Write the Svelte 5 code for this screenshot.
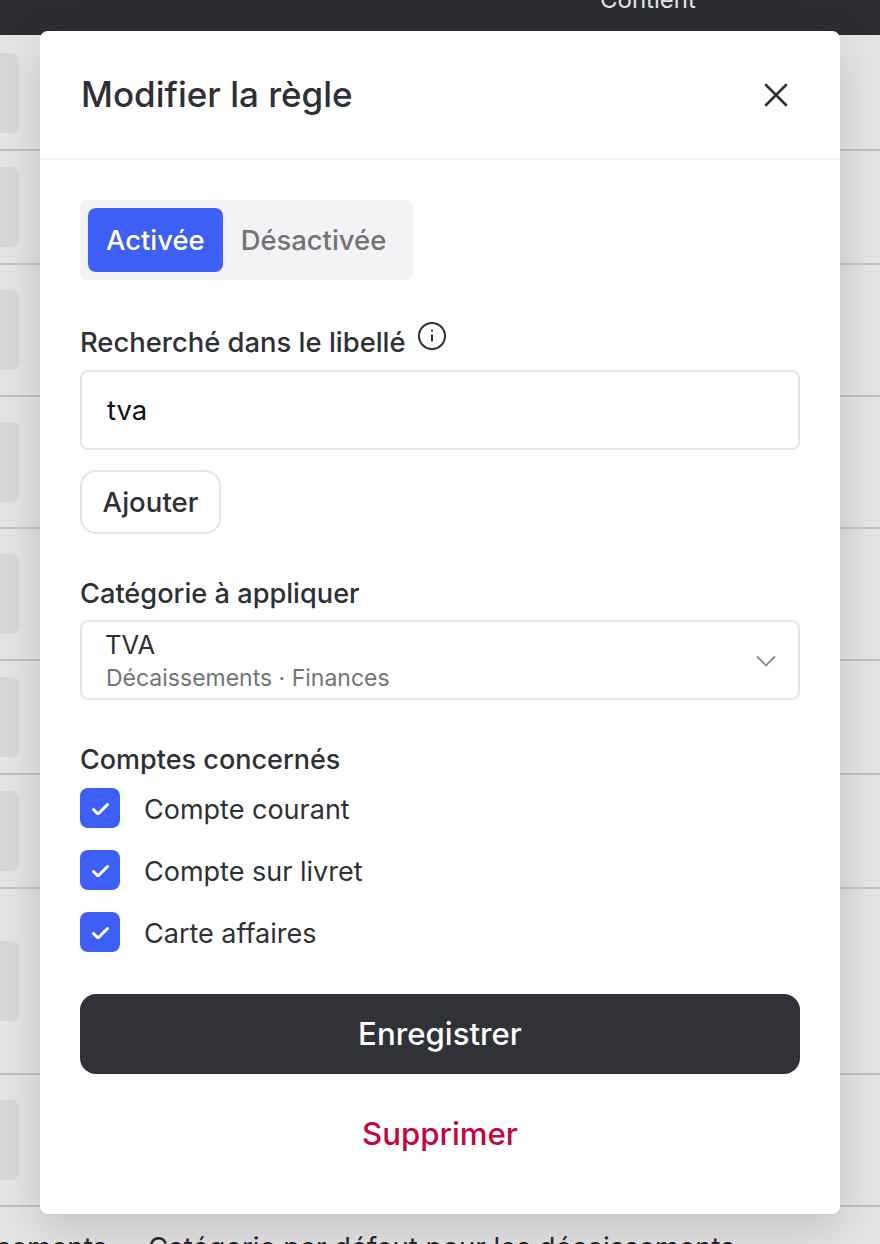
<script>
  const rows = ['s', 's', 'm', 'm', 'm', 's', 's', 'l', 'm'];
  const accounts = ['Compte courant', 'Compte sur livret', 'Carte affaires'];
</script>

<div class="page">
  <header class="topbar"><span class="col-title">Contient</span></header>
  <div class="table">
    {#each rows as r}
      <div class="row {r}"><span class="thumb"></span></div>
    {/each}
    <div class="last">
      <span class="c1">Décaissements</span>
      <span class="c2">Catégorie par défaut pour les décaissements</span>
    </div>
  </div>
  <div class="overlay"></div>
  <section class="modal">
    <div class="head">
      <h2>Modifier la règle</h2>
      <svg class="close" viewBox="0 0 24 24" width="24" height="24" fill="none" stroke="#2f3035" stroke-width="2.6" stroke-linecap="round"><path d="M2 2 22 22M22 2 2 22" /></svg>
    </div>
    <div class="body">
      <div class="seg">
        <span class="on">Activée</span>
        <span class="off">Désactivée</span>
      </div>
      <div class="label first">
        Recherché dans le libellé
        <svg class="info" viewBox="0 0 28 28" width="28" height="28" fill="none" stroke="#2f3035" stroke-width="2"><circle cx="14" cy="14" r="13" /><path d="M14 12.5v7" /><circle cx="14" cy="8.7" r="1.1" fill="#2f3035" stroke="none" /></svg>
      </div>
      <div class="input">tva</div>
      <div class="add">Ajouter</div>
      <div class="label cat">Catégorie à appliquer</div>
      <div class="select">
        <div>
          <div class="sel-main">TVA</div>
          <div class="sel-sub">Décaissements · Finances</div>
        </div>
        <svg class="chev" viewBox="0 0 20 12" width="20" height="12" fill="none" stroke="#8b8b90" stroke-width="1.8"><path d="M1 1.5 10 10.5 19 1.5" /></svg>
      </div>
      <div class="label acc">Comptes concernés</div>
      <div class="checks">
        {#each accounts as a}
          <div class="check">
            <span class="box">
              <svg viewBox="-0.5 -1 18 14" width="18" height="14" fill="none" stroke="#fff" stroke-width="3" stroke-linecap="round" stroke-linejoin="round"><path d="M2 7.5 6.5 12 16 2.5" /></svg>
            </span>
            <span>{a}</span>
          </div>
        {/each}
      </div>
      <div class="save">Enregistrer</div>
      <div class="del">Supprimer</div>
    </div>
  </section>
</div>

<style>
  :global(body) { margin: 0; }
  .page {
    position: relative;
    width: 880px;
    height: 1244px;
    overflow: hidden;
    background: #fff;
    font-family: Inter, "Liberation Sans", sans-serif;
    color: #2f3035;
  }
  .topbar {
    height: 35px;
    background: #323338;
    position: relative;
    z-index: 2;
    overflow: hidden;
    margin-bottom: 2px;
  }
  .col-title {
    display: block;
    margin-left: 600px;
    margin-top: -16px;
    font-size: 24px;
    line-height: 32px;
    color: #fff;
  }
  .row { display: flex; align-items: center; border-bottom: 2px solid #d9d9d9; box-sizing: border-box; }
  .row.s { height: 114px; }
  .row.m { height: 132px; }
  .row.l { height: 186px; }
  .thumb { display: block; width: 19px; height: 80px; background: #f2f2f3; border-radius: 0 8px 8px 0; }
  .last { position: relative; height: 40px; font-size: 27.6px; line-height: 32px; white-space: nowrap; color: #2f3035; }
  .c1 { position: absolute; right: 773px; top: 24px; }
  .c2 { position: absolute; left: 148px; top: 24px; }
  .overlay {
    position: absolute;
    inset: 0;
    background: rgba(0, 0, 0, 0.1);
    z-index: 3;
  }
  .modal {
    position: absolute;
    left: 40px;
    top: 31px;
    width: 800px;
    height: 1183px;
    background: #fff;
    border-radius: 8px;
    box-shadow: 0 16px 48px rgba(0, 0, 0, 0.16);
    z-index: 4;
  }
  .head {
    padding: 0 40px 2px 41px;
    height: 125px;
    display: flex;
    align-items: center;
    justify-content: space-between;
    border-bottom: 2px solid #f2f2f4;
  }
  h2 { margin: 0; font-size: 35px; font-weight: 450; line-height: 44px; }
  .close { margin-right: 12px; position: relative; top: 1px; }
  .body { padding: 40px; }
  .seg {
    display: inline-flex;
    box-sizing: border-box;
    height: 80px;
    padding: 8px;
    background: #f3f3f5;
    border-radius: 8px;
    font-size: 27.4px;
    font-weight: 450;
  }
  .seg span { display: flex; align-items: center; padding: 0 18px; border-radius: 8px; }
  .seg .off { padding-right: 19px; }
  .on { background: #3d5ff5; color: #fff; }
  .off { color: #737378; }
  .label { font-size: 27.4px; font-weight: 450; line-height: 32px; }
  .label.first { margin-top: 30px; display: flex; align-items: flex-start; gap: 12px; height: 60px; padding-top: 16px; box-sizing: border-box; }
  .info { margin-top: -4px; }
  .input {
    box-sizing: border-box;
    height: 80px;
    border: 2px solid #e4e4ea;
    border-radius: 8px;
    padding: 0 25px;
    display: flex;
    align-items: center;
    font-size: 27.5px;
    color: #111;
  }
  .add {
    margin-top: 20px;
    box-sizing: border-box;
    width: 141px;
    height: 64px;
    border: 2px solid #e4e4ea;
    border-radius: 16px;
    display: flex;
    align-items: center;
    justify-content: center;
    font-size: 27.6px;
    font-weight: 450;
  }
  .label.cat { margin-top: 44px; height: 42px; font-size: 27.2px; }
  .select {
    box-sizing: border-box;
    height: 80px;
    border: 2px solid #e4e4ea;
    border-radius: 8px;
    padding: 3px 23px 0 24px;
    display: flex;
    align-items: center;
    justify-content: space-between;
  }
  .sel-main { font-size: 25.6px; line-height: 32px; margin-left: -1px; }
  .sel-sub { font-size: 23px; line-height: 33px; color: #737378; position: relative; top: 1px; }
  .chev { position: relative; top: -1px; left: 1px; }
  .label.acc { margin-top: 44px; height: 44px; font-size: 27px; }
  .checks { display: flex; flex-direction: column; gap: 22px; }
  .check { display: flex; align-items: center; gap: 24px; height: 40px; font-size: 27px; }
  .check span:last-child { position: relative; top: 1px; }
  .box { width: 40px; height: 40px; background: #3d5ff5; border-radius: 8px; display: flex; align-items: center; justify-content: center; }
  .save {
    margin-top: 42px;
    height: 80px;
    background: #313237;
    color: #fff;
    border-radius: 16px;
    display: flex;
    align-items: center;
    justify-content: center;
    font-size: 31.2px;
    font-weight: 450;
  }
  .del {
    margin-top: 40px;
    text-align: center;
    font-size: 31.2px;
    font-weight: 450;
    line-height: 40px;
    color: #c4063d;
  }
</style>
